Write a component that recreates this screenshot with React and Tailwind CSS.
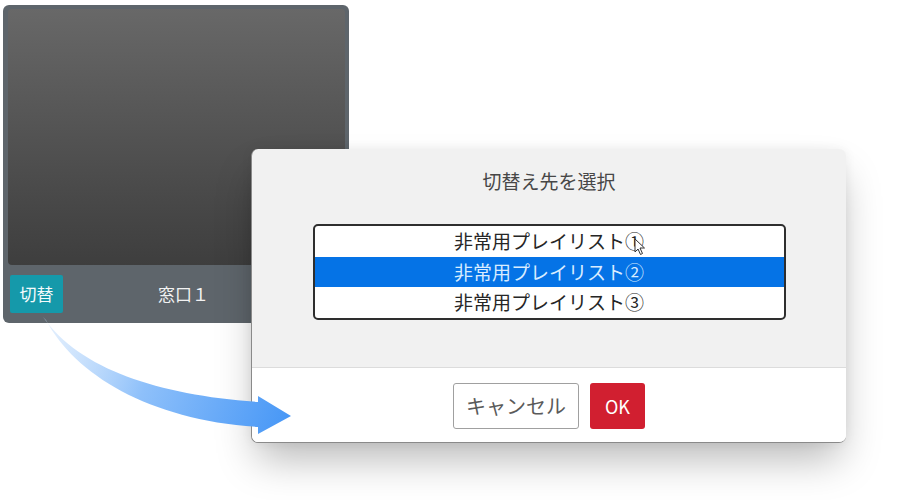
import React from "react";

const jp = { fontFamily: '"Noto Sans CJK JP", "Noto Sans", sans-serif' };

export default function App() {
  return (
    <div className="relative w-[902px] h-[500px] bg-white overflow-hidden" style={jp}>
      {/* Source card */}
      <div className="ml-[3px] mt-[5px] w-[346px] h-[318px] rounded-[6px] bg-[#5e656b] flex flex-col">
        <div className="mt-[4px] ml-[5px] mr-[4px] h-[256px] rounded-[4px] bg-gradient-to-b from-[#686868] to-[#3e3e3e]" />
        <div className="flex flex-1 items-center pl-[7px] pb-[1px]">
          <div className="w-[53px] h-[38px] rounded-[2px] bg-[#1599aa] flex items-center justify-center text-[#f4fbfc] text-[17px]">
            切替
          </div>
          <div className="ml-[95px] text-[#f2f2f2] text-[17px]">窓口１</div>
        </div>
      </div>

      {/* Dialog */}
      <div className="absolute left-[251px] top-[149px] w-[595px] h-[294px] rounded-[7px] bg-[#f1f1f1] border-l border-b border-[#8a8a8a] shadow-[0_22px_40px_-6px_rgba(0,0,0,0.28),0_0_12px_rgba(0,0,0,0.06)] flex flex-col overflow-hidden">
        <div className="h-[218px] flex flex-col items-center">
          <div className="mt-[19px] text-[19px] text-[#474747] leading-[26px]">切替え先を選択</div>
          <div className="mt-[30px] w-[473px] h-[96px] border-2 border-[#2e2e2e] rounded-[5px] bg-white flex flex-col overflow-hidden">
            <div className="h-[31px] flex items-center justify-center text-[19px] text-[#262626]">非常用プレイリスト①</div>
            <div className="h-[30px] flex items-center justify-center text-[19px] text-[#d8ecff] bg-[#0573e6]">非常用プレイリスト②</div>
            <div className="flex-1 flex items-center justify-center text-[19px] text-[#262626]">非常用プレイリスト③</div>
          </div>
        </div>
        <div className="flex-1 bg-white border-t border-[#dcdcdc] flex justify-center pt-[15px] gap-[11px]">
          <div className="w-[126px] h-[46px] border border-[#a0a0a0] rounded-[3px] bg-white flex items-center justify-center text-[20px] text-[#5a5a5a]">
            キャンセル
          </div>
          <div className="w-[55px] h-[46px] rounded-[3px] bg-[#d11f30] flex items-center justify-center text-[18px] text-white">
            OK
          </div>
        </div>
      </div>

      {/* Mouse cursor */}
      <svg className="absolute left-[634px] top-[238px]" width="12" height="18" viewBox="0 0 12 18">
        <path d="M1 1 L1 14 L4 11 L6.5 16.5 L8.5 15.5 L6 10 L10.5 10 Z" fill="#fff" stroke="#333" strokeWidth="1" strokeLinejoin="round" />
      </svg>

      {/* Arrow */}
      <svg className="absolute left-0 top-0 pointer-events-none" width="902" height="500" viewBox="0 0 902 500">
        <defs>
          <linearGradient id="arrowGrad" x1="40" y1="320" x2="292" y2="416" gradientUnits="userSpaceOnUse">
            <stop offset="0" stopColor="#cfe4fc" stopOpacity="0.5" />
            <stop offset="0.45" stopColor="#8ec0fa" />
            <stop offset="1" stopColor="#4797f6" />
          </linearGradient>
        </defs>
        <path
          d="M43 317 C80 370 160 395 258 402 L258 396 L291 416 L258 434 L258 427 C150 420 75 375 46 320 Z"
          fill="url(#arrowGrad)"
        />
      </svg>
    </div>
  );
}
